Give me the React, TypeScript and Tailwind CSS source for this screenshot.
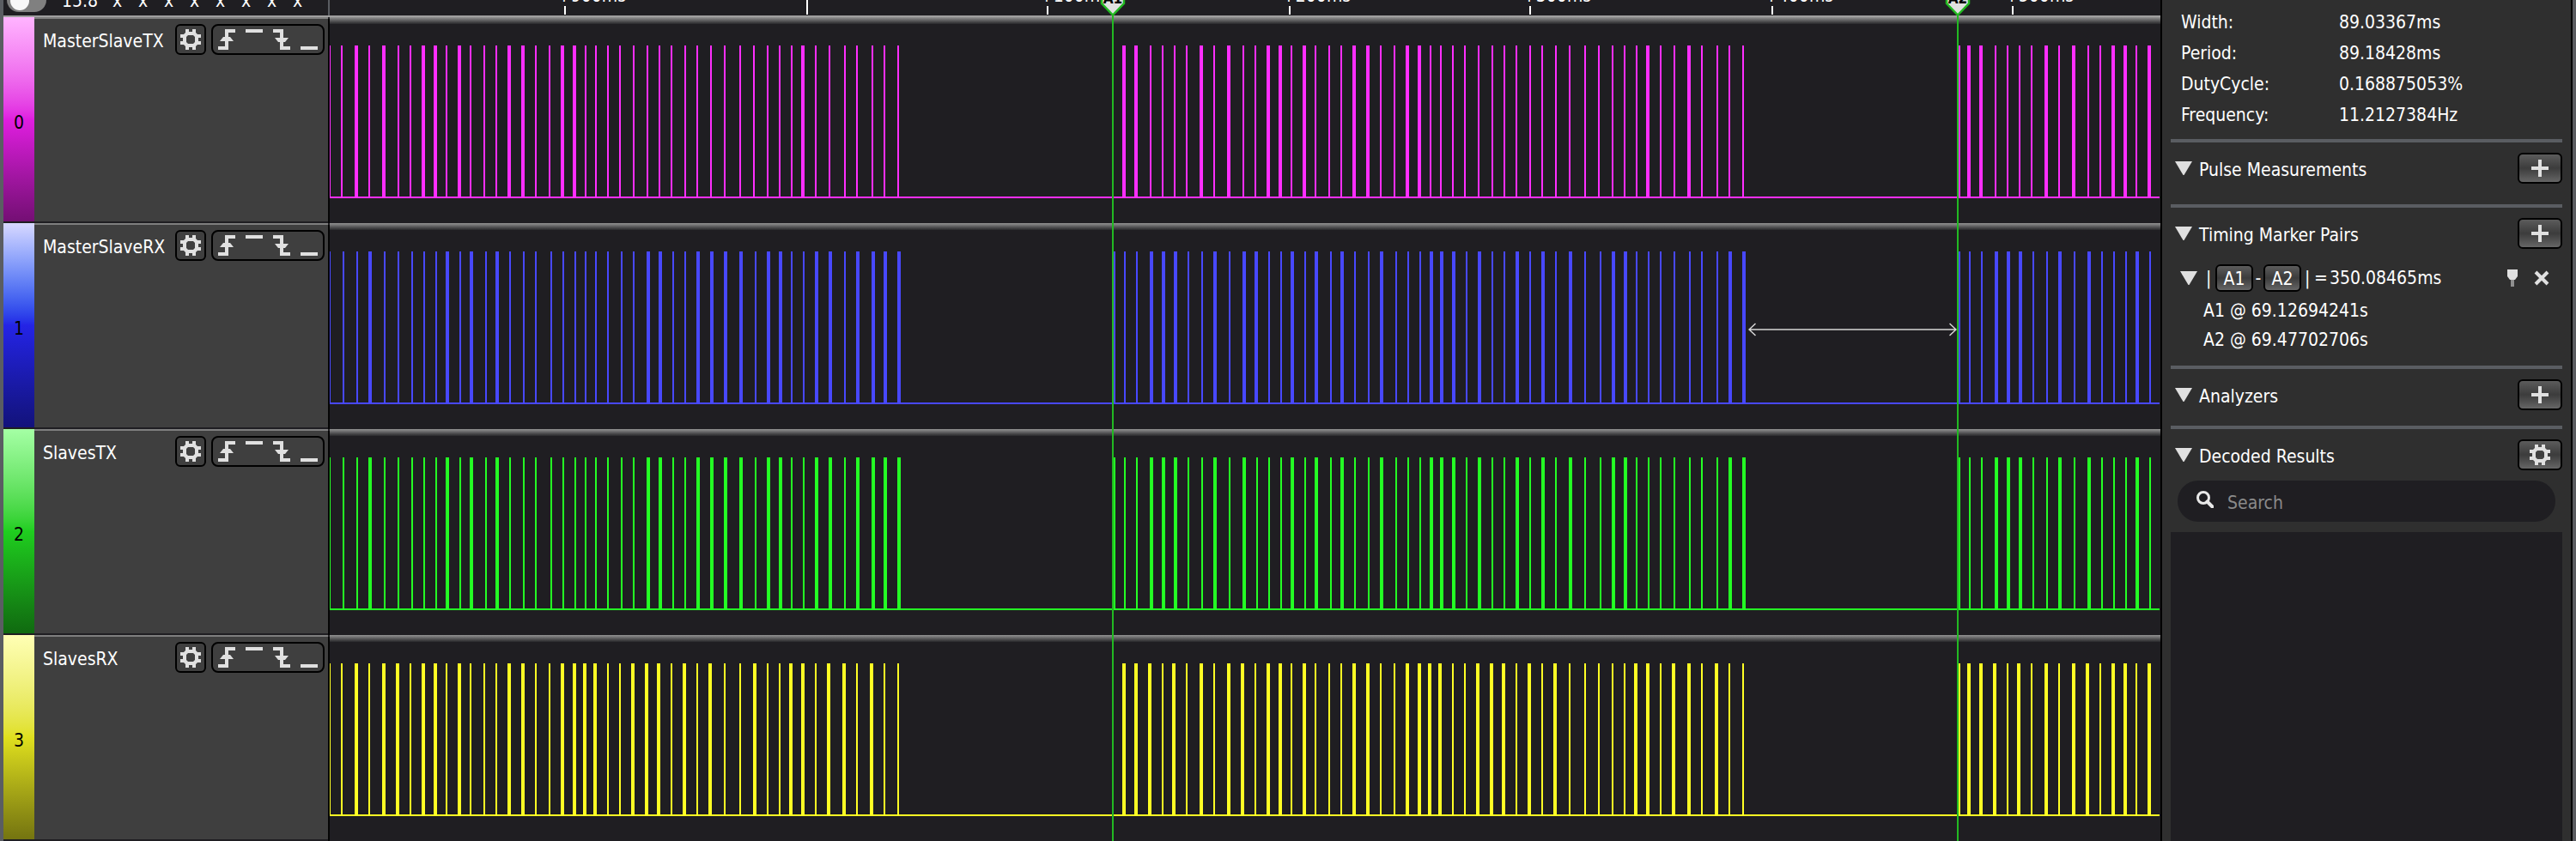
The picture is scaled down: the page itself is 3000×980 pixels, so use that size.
import React from 'react';

type Bars = [number, number][];

const AXIS_START = 384;
const AXIS_WIDTH = 2132;

// Edge lists: a trailing "w" marks a burst that is drawn twice as wide.
function parse(list: string): Bars {
  return list
    .trim()
    .split(/\s+/)
    .map((s) => (s.endsWith('w') ? [parseInt(s, 10), 4] : [parseInt(s, 10), 2]) as [number, number]);
}

const TX = parse(`383 397 413w 429 445w 463 477 491w 505w 519 533w 547 563 577 591w 607w 623 639 653w 667w 681 693 707 721
 737 753 767 781 797 811 827 843 861 877 893 907 921 933w 949 965 983 997 1015 1029 1045
 1307w 1321w 1339 1353 1367 1381 1397w 1413 1429w 1447 1461 1475w 1489w 1503 1517w 1531 1547 1561 1575w 1591w 1607 1623
 1637w 1651w 1665 1677 1691 1705 1721 1737 1751 1765 1781 1795 1811 1827 1845 1861 1877 1891 1905 1917w 1933 1949 1965w
 1981 1999 2013 2029
 2281 2291w 2305w 2323 2337 2351 2365 2381w 2397 2413w 2431 2445 2459w 2473w 2487 2501w`);

const FIRST = `383 399 415 429w 447 463 479 493 507 519w 535 547w 565 577w 593 609 623 641 655 669 681 693 707 723 737 753w 767w
 783 797 811w 827w 843w 861w 879 893w 907w 921 935 949w 965w 983 997w 1015w 1029w 1045w 1297 1309 1323 1339w 1353w 1367w
 1383 1399 1413w 1431 1447w`;
const REST = `1477 1491 1503w 1519 1531w 1549 1561w 1577 1593 1607w 1625 1639 1653 1665w 1677w 1691w 1707 1721w 1737 1751
 1765w 1781 1795w 1811 1827w 1845 1863 1877w 1891w 1905 1919 1933 1949 1967 1981 1999 2013w 2029w
 2281 2293 2307 2323w 2337w 2351w 2367 2383 2397w 2415 2431w 2447 2461 2475 2487w 2503`;
const RX = parse(`${FIRST} 1461w ${REST}`);
const STX = parse(`${FIRST} 1463 ${REST}`);

const SRX = parse(`383 397 413w 429 445w 461w 477 491w 505w 519 533w 547 563 577 591w 607w 623 639 653w 667w 679w 691w 707
 721 735w 751w 765w 781 795w 811 825w 843 861 877w 893 907 919w 933w 949 963w 981w 997 1013w 1029 1045
 1307w 1321w 1337w 1353 1365w 1381 1397w 1413 1429w 1445w 1461 1475w 1489w 1503 1517w 1531 1547 1561 1575w 1591w 1607
 1623 1637w 1651w 1663w 1675w 1691 1705 1719w 1735w 1749w 1765 1779w 1795 1809w 1827 1845 1861 1877 1891 1903w 1917w 1933
 1947w 1965w 1981 1997w 2013 2029
 2281 2291w 2305w 2321w 2337 2349w 2365 2381w 2397 2413w 2429w 2445 2459w 2473w 2487 2501w`);

const channels = [
  { name: 'MasterSlaveTX', strip: 'from-[#ffb4ff] via-[#e01ee0] to-[#740f74]', color: '#ff2eff', bars: TX },
  { name: 'MasterSlaveRX', strip: 'from-[#d8d8ff] via-[#2424e6] to-[#12127a]', color: '#4848ff', bars: RX },
  { name: 'SlavesTX', strip: 'from-[#a4ffa4] via-[#1fce1f] to-[#106a10]', color: '#24ff24', bars: STX },
  { name: 'SlavesRX', strip: 'from-[#ffffb4] via-[#e0e01e] to-[#747410]', color: '#ffff24', bars: SRX },
];

const ticks = [
  { x: 658, label: '+900ms' },
  { x: 940, label: '' },
  { x: 1220, label: '+100ms' },
  { x: 1502, label: '+200ms' },
  { x: 1782, label: '+300ms' },
  { x: 2064, label: '+400ms' },
  { x: 2344, label: '+500ms' },
];

const markers = [
  { x: 1296, label: 'A1' },
  { x: 2280, label: 'A2' },
];

const percent = (x: number) => `${((x - AXIS_START) / AXIS_WIDTH) * 100}%`;

function Gear() {
  return (
    <svg viewBox="0 0 24 24" className="h-6 w-6" fill="#e0e0e0" aria-hidden="true">
      <path
        fillRule="evenodd"
        d="M6 0h4v3h4V0h4v4l2 2h4v4h-3v4h3v4h-4l-2 2v4h-4v-3h-4v3H6v-4l-2-2H0v-4h3v-4H0V6h4l2-2zM9 7L7 9v6l2 2h6l2-2V9l-2-2z"
      />
    </svg>
  );
}

function TriggerIcon({ kind }: { kind: number }) {
  const paths = [
    'M0 20h8v-6H2l4-5h2V0h12v4h-8v5h2l4 5h-6v10H0z',
    'M0 0h20v4H0z',
    'M0 0h12v10h6l-4 5h-2v5h8v4H8v-9H6l-4-5h6V4H0z',
    'M0 20h20v4H0z',
  ];
  return (
    <svg viewBox="0 0 20 24" className="h-6 w-5" fill="#e0e0e0" aria-hidden="true">
      <path d={paths[kind]} />
    </svg>
  );
}

function Triangle() {
  return (
    <svg viewBox="0 0 20 16" className="h-4 w-5 shrink-0" fill="#e0e0e0" aria-hidden="true">
      <path d="M0 0h20L10.500 16h-1z" />
    </svg>
  );
}

const raised = 'border-2 border-black rounded-md bg-linear-to-b from-[#5c5c5c] via-[#3c3c3c] to-[#666666]';

function Section({ title, icon, children }: { title: string; icon: 'plus' | 'gear'; children?: React.ReactNode }) {
  return (
    <section className="border-t-4 border-[#5a5d62] pt-3">
      <div className="flex h-9 items-center">
        <button type="button" className="flex items-center gap-2 pl-[5px]">
          <Triangle />
          <h2 className="pt-1">{title}</h2>
        </button>
        <button
          type="button"
          aria-label={icon === 'plus' ? `Add to ${title}` : `${title} settings`}
          className={`${raised} ml-auto flex h-9 w-[52px] items-center justify-center`}
        >
          {icon === 'plus' ? (
            <svg viewBox="0 0 20 20" className="h-5 w-5" fill="#e0e0e0" aria-hidden="true">
              <path d="M8 0h4v8h8v4h-8v8H8v-8H0V8h8z" />
            </svg>
          ) : (
            <Gear />
          )}
        </button>
      </div>
      {children}
    </section>
  );
}

const triggers = ['Rising edge', 'High', 'Falling edge', 'Low'];

export default function App() {
  return (
    <div className="flex min-h-screen overflow-hidden bg-[#1f1e22] font-['DejaVu_Sans_Condensed','Noto_Sans',sans-serif] text-[21px] leading-6 text-white">
      <div className="w-1 shrink-0 bg-[#5a5d62]" />

      <main className="relative min-w-0 flex-1">
        <header className="flex h-5 border-b-2 border-[#9f9f9f]">
          <div className="flex h-[18px] w-[380px] shrink-0 items-end overflow-hidden border-r-2 border-[#5a5d62] pl-1">
            <input
              type="checkbox"
              role="switch"
              aria-label="Trigger"
              className="mb-1 h-7 w-[46px] shrink-0 appearance-none rounded-full bg-[#808080] before:m-1 before:block before:h-[22px] before:w-[22px] before:rounded-full before:bg-[#f8f8f8]"
            />
            <span className="mb-[5px] ml-[18px] w-[59px]">15.8</span>
            {Array.from({ length: 8 }, (_, i) => (
              <span key={i} className="mb-[5px] w-[30px]">
                x
              </span>
            ))}
          </div>
          <div className="relative h-[18px] flex-1 overflow-hidden">
            {ticks.map((t) => (
              <div key={t.x} className="absolute top-0 h-[17px]" style={{ left: percent(t.x) }}>
                <div className={`-ml-px w-0.5 bg-white ${t.label ? 'mt-[7px] h-2.5' : 'h-[17px]'}`} />
                <span className="absolute -top-[17px] -left-[9px]">{t.label}</span>
              </div>
            ))}
          </div>
        </header>

        {channels.map((c, i) => (
          <div key={c.name} className="flex h-60">
            <div className={`mb-0.5 flex w-9 shrink-0 items-center justify-center bg-linear-to-b pt-2 text-black ${c.strip}`}>{i}</div>
            <div className="mb-0.5 flex w-[342px] shrink-0 items-start border-t-2 border-[#7f7f7f] bg-[#3f3f3f] pt-1.5 pr-1 pl-2.5">
              <span className="pt-2">{c.name}</span>
              <button
                type="button"
                aria-label={`${c.name} settings`}
                className="ml-auto flex h-9 w-9 items-center justify-center rounded-md border-2 border-black"
              >
                <Gear />
              </button>
              <div className="ml-1.5 flex h-9 w-[132px] items-center gap-3 rounded-lg border-2 border-black pl-1.5">
                {triggers.map((t, k) => (
                  <button key={t} type="button" aria-label={`${c.name} ${t}`}>
                    <TriggerIcon kind={k} />
                  </button>
                ))}
              </div>
            </div>
            <div className="mt-0.5 w-0.5 shrink-0 bg-[#050505]" />
            <div className="min-w-0 flex-1">
              <div className="h-2 bg-linear-to-b from-[#949494] to-[#29292c]" />
              <svg
                viewBox={`${AXIS_START} 8 ${AXIS_WIDTH} 224`}
                preserveAspectRatio="none"
                className="block h-56 w-full"
                shapeRendering="crispEdges"
                fill={c.color}
                aria-hidden="true"
              >
                {c.bars.map(([x, w]) => (
                  <rect key={x} x={x} y={33} width={w} height={177} />
                ))}
                <rect x={AXIS_START} y={209} width={AXIS_WIDTH - 1} height={2} />
              </svg>
            </div>
          </div>
        ))}

        <div className="pointer-events-none absolute inset-y-0 right-0 left-[380px] overflow-hidden">
          {markers.map((m) => (
            <div key={m.label} className="absolute inset-y-0 w-0" style={{ left: percent(m.x) }}>
              <div className="absolute top-[18px] bottom-0 -left-px w-0.5 bg-[#22b922]" />
              <svg viewBox="0 0 30 32" className="absolute -top-3 -left-[15px] h-8 w-[30px]" aria-hidden="true">
                <path d="M2 -2V16L15 29.500 28 16V-2z" fill="#e0e0e0" stroke="#22b922" strokeWidth="2.500" />
              </svg>
              <span className="absolute -top-3 -left-3 w-6 text-center text-[17px] leading-5 font-bold text-black">{m.label}</span>
            </div>
          ))}
          <div className="absolute top-[376px] flex h-4 items-center" style={{ left: percent(2036), right: `${((2516 - 2279) / AXIS_WIDTH) * 100}%` }}>
            <svg viewBox="0 0 9 16" className="h-4 w-[9px]" fill="none" stroke="#d8d8d8" strokeWidth="1.500" aria-hidden="true">
              <path d="M8.500 1L1 8l7.500 7M1 8h8" />
            </svg>
            <div className="h-0.5 flex-1 bg-[#a8a8a8]" />
            <svg viewBox="0 0 9 16" className="h-4 w-[9px]" fill="none" stroke="#d8d8d8" strokeWidth="1.500" aria-hidden="true">
              <path d="M.5 1L8 8 .5 15M8 8H0" />
            </svg>
          </div>
        </div>
      </main>

      <aside className="flex w-[480px] shrink-0 flex-col border-x-2 border-black bg-[#2f2f2f] px-2.5">
        <dl className="grid grid-cols-[184px_1fr] gap-y-3 pt-[14px] pb-[16px] pl-3">
          <dt>Width:</dt>
          <dd>89.03367ms</dd>
          <dt>Period:</dt>
          <dd>89.18428ms</dd>
          <dt>DutyCycle:</dt>
          <dd>0.168875053%</dd>
          <dt>Frequency:</dt>
          <dd>11.2127384Hz</dd>
        </dl>

        <Section title="Pulse Measurements" icon="plus">
          <div className="h-6" />
        </Section>

        <Section title="Timing Marker Pairs" icon="plus">
          <div className="mt-[18px] flex h-8 items-center pl-[11px]">
            <button type="button" aria-label="Collapse pair">
              <Triangle />
            </button>
            <span className="w-[21px] pl-2.5">|</span>
            <button type="button" className={`${raised} h-8 w-11 pt-0.5`}>A1</button>
            <span className="w-3 text-center">-</span>
            <button type="button" className={`${raised} h-8 w-11 pt-0.5`}>A2</button>
            <span className="w-[15px] pl-1">|</span>
            <span className="w-[18px]">=</span>
            <span>350.08465ms</span>
            <button type="button" aria-label="Pin" className="mr-[19px] ml-auto">
              <svg viewBox="0 0 12 20" className="h-5 w-3" aria-hidden="true">
                <path d="M0 0h12v8l-3 4H3L0 8z" fill="#e0e0e0" />
                <path d="M4 12h4v8H4z" fill="#8f8f8f" />
              </svg>
            </button>
            <button type="button" aria-label="Remove" className="mr-[15px]">
              <svg viewBox="0 0 18 18" className="h-[18px] w-[18px]" stroke="#e0e0e0" strokeWidth="4" aria-hidden="true">
                <path d="M2 2l14 14M16 2L2 16" />
              </svg>
            </button>
          </div>
          <div className="flex flex-col gap-2.5 pt-2.5 pb-[18px] pl-[38px]">
            <p>A1 @ 69.12694241s</p>
            <p>A2 @ 69.47702706s</p>
          </div>
        </Section>

        <Section title="Analyzers" icon="plus">
          <div className="h-[18px]" />
        </Section>

        <Section title="Decoded Results" icon="gear">
          <label className="mx-2 mt-3 flex h-12 items-center gap-4 rounded-full bg-[#1f1e22] pl-[22px]">
            <svg viewBox="0 0 20 20" className="mb-1 h-5 w-5" fill="none" stroke="#e8e8e8" aria-hidden="true">
              <circle cx="8" cy="8" r="6.500" strokeWidth="3" />
              <path d="M12.500 12.500l6 6" strokeWidth="4" strokeLinecap="round" />
            </svg>
            <input
              type="search"
              aria-label="Search"
              placeholder="Search"
              className="mt-1 min-w-0 flex-1 bg-transparent outline-none placeholder:text-[#8a8a8a]"
            />
          </label>
        </Section>

        <div className="mt-3 flex-1 bg-[#1f1e22]" />
      </aside>
      <div className="w-1 shrink-0 bg-[#5a5b60]" />
    </div>
  );
}
